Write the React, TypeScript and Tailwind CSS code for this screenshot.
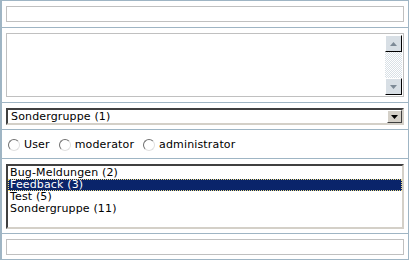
import React from "react";

const font = { fontFamily: '"DejaVu Sans", Verdana, sans-serif', letterSpacing: "0.15px" };

function Radio({ label }: { label: string }) {
  return (
    <label className="flex items-center gap-[4px]">
      <span className="relative w-[12px] h-[12px] rounded-full border border-t-[#707070] border-l-[#707070] border-b-[#e0e0e0] border-r-[#e0e0e0] bg-white" />
      <span>{label}</span>
    </label>
  );
}

export default function App() {
  return (
    <div className="w-[410px] h-[261px] bg-white text-[11px] text-black" style={font}>
      <div className="w-[409px] border border-[#9fb5c4] border-l-2 flex flex-col">
        <div className="px-[4px] py-[5px] border-b border-[#9fb5c4]">
          <div className="h-[16px] border border-[#c0c0c0] bg-white" />
        </div>
        <div className="px-[4px] py-[5px] border-b border-[#9fb5c4]">
          <div className="h-[64px] border border-[#c0c0c0] bg-white flex justify-end p-[1px]">
            <div className="w-[17px] flex flex-col bg-[repeating-conic-gradient(#d8e0e6_0%_25%,#ffffff_0%_50%)] bg-[length:2px_2px]">
              <div className="h-[17px] bg-[#d8dfe5] border border-t-white border-l-white border-r-black border-b-black flex items-center justify-center">
                <svg width="7" height="4" viewBox="0 0 7 4"><path d="M3.5 0 L7 4 L0 4 Z" fill="#7d8a96" /></svg>
              </div>
              <div className="flex-1" />
              <div className="h-[17px] bg-[#d8dfe5] border border-t-white border-l-white border-r-black border-b-black flex items-center justify-center">
                <svg width="7" height="4" viewBox="0 0 7 4"><path d="M0 0 L7 0 L3.5 4 Z" fill="#7d8a96" /></svg>
              </div>
            </div>
          </div>
        </div>
        <div className="px-[4px] pt-[5px] pb-[4px] border-b border-[#9fb5c4]">
          <div className="h-[17px] border-2 border-t-[#404040] border-l-[#404040] border-r-[#d4d0c8] border-b-[#d4d0c8] bg-white flex items-center">
            <span className="flex-1 pl-[3px] leading-none">Sondergruppe (1)</span>
            <div className="w-[15px] h-[13px] bg-[#d4d0c8] border border-t-white border-l-white border-r-[#404040] border-b-[#404040] flex items-center justify-center">
              <svg width="7" height="4" viewBox="0 0 7 4"><path d="M0 0 L7 0 L3.5 4 Z" fill="#000" /></svg>
            </div>
          </div>
        </div>
        <div className="h-[29px] px-[6px] pt-[2px] flex items-center gap-[9px] border-b border-[#9fb5c4]">
          <Radio label="User" />
          <Radio label="moderator" />
          <Radio label="administrator" />
        </div>
        <div className="px-[4px] pt-[5px] pb-[4px] border-b border-[#9fb5c4]">
          <div className="h-[65px] border-2 border-t-[#404040] border-l-[#404040] border-r-[#d4d0c8] border-b-[#d4d0c8] bg-white pt-[1px] leading-[12px]">
            <div className="px-[2px] h-[12px]">Bug-Meldungen (2)</div>
            <div className="px-[2px] h-[12px] bg-[#0a246a] text-white outline-1 outline-dotted outline-[#f0e080] -outline-offset-1">Feedback (3)</div>
            <div className="px-[2px] h-[12px]">Test (5)</div>
            <div className="px-[2px] h-[12px]">Sondergruppe (11)</div>
          </div>
        </div>
        <div className="px-[4px] pt-[5px] pb-[4px]">
          <div className="h-[16px] border border-[#c0c0c0] bg-white" />
        </div>
      </div>
    </div>
  );
}
